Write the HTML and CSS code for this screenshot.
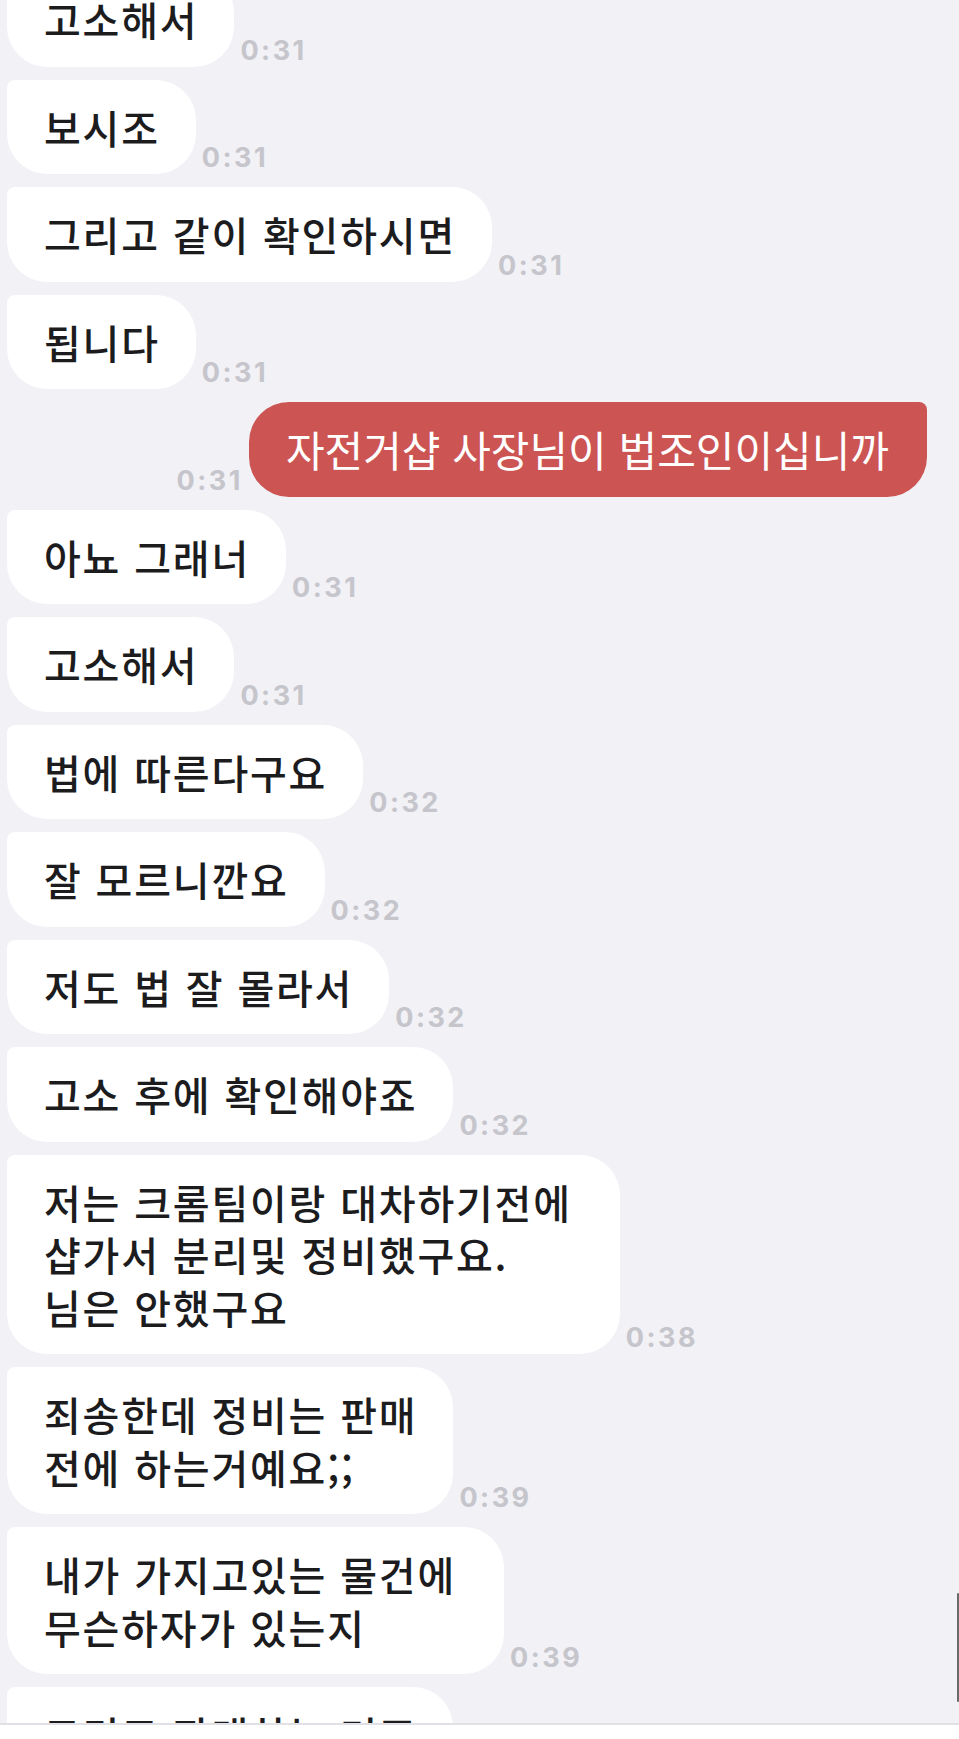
FILE: index.html
```html
<!DOCTYPE html>
<html lang="ko">
<head>
    <meta charset="UTF-8">
    <meta name="viewport" content="width=device-width, initial-scale=1.0">
    <title>채팅</title>
    <link rel="stylesheet" href="styles.css">
</head>
<body>

<div class="screen">
  <div class="chat">
    <div class="messages">

      <div class="row">
        <div class="bubble">고소해서</div>
        <span class="time">0:31</span>
      </div>
      <div class="row">
        <div class="bubble">보시조</div>
        <span class="time">0:31</span>
      </div>
      <div class="row">
        <div class="bubble">그리고 같이 확인하시면</div>
        <span class="time">0:31</span>
      </div>
      <div class="row">
        <div class="bubble">됩니다</div>
        <span class="time">0:31</span>
      </div>

      <div class="row row-me">
        <span class="time">0:31</span>
        <div class="bubble bubble-me">자전거샵 사장님이 법조인이십니까</div>
      </div>

      <div class="row">
        <div class="bubble">아뇨 그래너</div>
        <span class="time">0:31</span>
      </div>
      <div class="row">
        <div class="bubble">고소해서</div>
        <span class="time">0:31</span>
      </div>
      <div class="row">
        <div class="bubble">법에 따른다구요</div>
        <span class="time">0:32</span>
      </div>
      <div class="row">
        <div class="bubble">잘 모르니깐요</div>
        <span class="time">0:32</span>
      </div>
      <div class="row">
        <div class="bubble">저도 법 잘 몰라서</div>
        <span class="time">0:32</span>
      </div>
      <div class="row">
        <div class="bubble">고소 후에 확인해야죠</div>
        <span class="time">0:32</span>
      </div>
      <div class="row">
        <div class="bubble bubble-wide">저는 크롬팀이랑 대차하기전에<br>샵가서 분리및 정비했구요.<br>님은 안했구요</div>
        <span class="time">0:38</span>
      </div>
      <div class="row">
        <div class="bubble">죄송한데 정비는 판매<br>전에 하는거예요;;</div>
        <span class="time">0:39</span>
      </div>
      <div class="row">
        <div class="bubble bubble-wide">내가 가지고있는 물건에<br>무슨하자가 있는지</div>
        <span class="time">0:39</span>
      </div>
      <div class="row">
        <div class="bubble">그리고 판매하는 거죠</div>
      </div>

    </div>
  </div>
  <div class="bottom-bar"></div>
  <div class="scroll-thumb"></div>
</div>

</body>
</html>
```

FILE: styles.css
```css
body {
  margin: 0;
  background-color: #f1f1f6;
  font-family: "Noto Sans CJK KR", "Noto Sans", sans-serif;
}

.screen {
  position: relative;
  height: 1739px;
  display: flex;
  flex-direction: column;
  overflow: hidden;
}

.chat {
  height: 1723px;
  overflow: hidden;
}

.messages {
  display: flex;
  flex-direction: column;
  gap: 13px;
  margin-top: -28px;
}

.row {
  display: flex;
  align-items: flex-end;
  gap: 6px;
  padding-left: 7px;
}

.row-me {
  justify-content: flex-end;
  padding-left: 0;
  padding-right: 32px;
}

.bubble {
  background-color: #ffffff;
  color: #1c1c1e;
  font-size: 40px;
  font-weight: 500;
  letter-spacing: 1.8px;
  line-height: 52.5px;
  padding: 21px 36px 21px 37px;
  border-radius: 8px 40px 40px 40px;
}

.bubble-wide {
  padding-right: 48px;
}

.bubble-me {
  background-color: #cc5453;
  color: #ffffff;
  font-size: 42px;
  font-weight: 400;
  letter-spacing: 0;
  padding-right: 38px;
  border-radius: 40px 8px 40px 40px;
}

.time {
  font-family: Inter, "Liberation Sans", sans-serif;
  font-weight: 700;
  font-size: 27px;
  line-height: 1;
  letter-spacing: 2.5px;
  color: #c5c5cb;
  margin-bottom: 3px;
}

.bottom-bar {
  flex: 1;
  background-color: #ffffff;
  border-top: 2px solid #e1e1e5;
}

.scroll-thumb {
  position: absolute;
  right: 0;
  top: 1593px;
  width: 2px;
  height: 109px;
  background-color: #6a6a6a;
  border-radius: 1px;
}
```
